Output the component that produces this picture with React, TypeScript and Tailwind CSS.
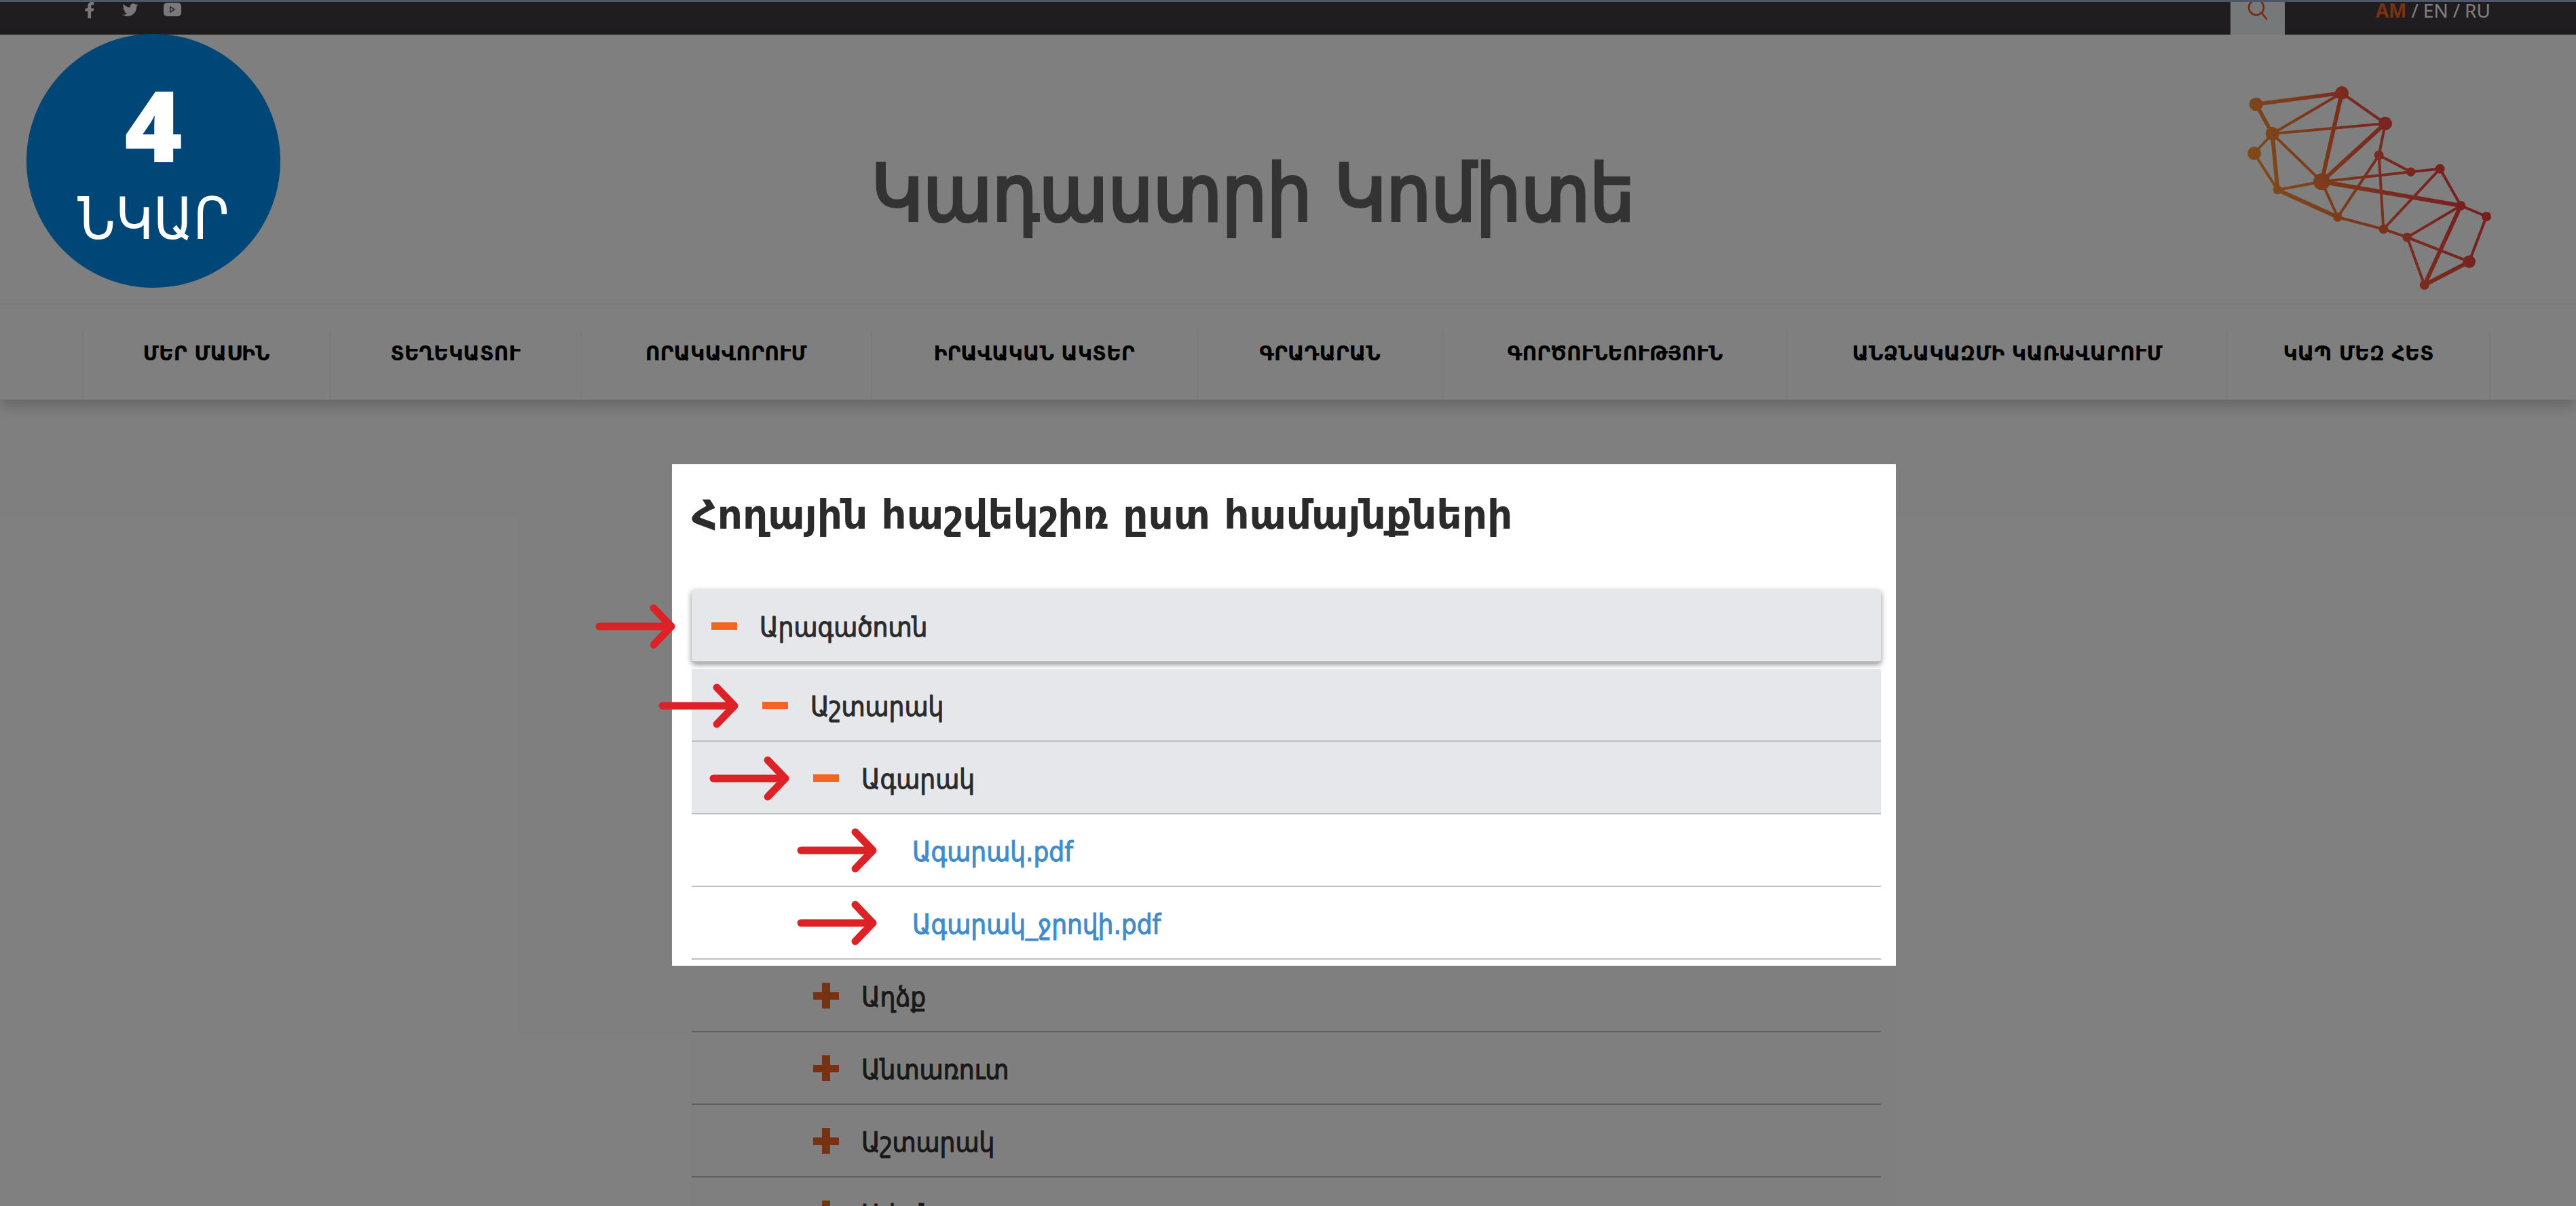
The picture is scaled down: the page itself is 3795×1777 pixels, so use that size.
import type { ReactNode } from 'react';
import { FaFacebookF, FaTwitter } from 'react-icons/fa';

const NAV_ITEMS = [
  { label: 'ՄԵՐ ՄԱՍԻՆ', basis: 'basis-[364px]' },
  { label: 'ՏԵՂԵԿԱՏՈՒ', basis: 'basis-[370px]' },
  { label: 'ՈՐԱԿԱՎՈՐՈՒՄ', basis: 'basis-[428px]' },
  { label: 'ԻՐԱՎԱԿԱՆ ԱԿՏԵՐ', basis: 'basis-[480px]' },
  { label: 'ԳՐԱԴԱՐԱՆ', basis: 'basis-[362px]' },
  { label: 'ԳՈՐԾՈՒՆԵՈՒԹՅՈՒՆ', basis: 'basis-[508px]' },
  { label: 'ԱՆՁՆԱԿԱԶՄԻ ԿԱՌԱՎԱՐՈՒՄ', basis: 'basis-[648px]' },
  { label: 'ԿԱՊ ՄԵԶ ՀԵՏ', basis: 'basis-[387px]' },
];

const VILLAGES = ['Աղձք', 'Անտառուտ', 'Աշտարակ', 'Ավան'];

// x, y, radius
const NODES = [
  [131, 161, 30],
  [510, 111, 30],
  [203, 291, 30],
  [702, 246, 30],
  [123, 378, 30],
  [226, 539, 20],
  [421, 503, 37],
  [674, 386, 21],
  [815, 460, 20],
  [944, 446, 21],
  [492, 660, 20],
  [694, 713, 21],
  [799, 749, 21],
  [1036, 609, 21],
  [1149, 657, 21],
  [1073, 857, 28],
  [875, 960, 21],
];

// from, to, stroke width
const EDGES = [
  [0, 1, 17],
  [0, 2, 17],
  [1, 2, 12],
  [1, 3, 12],
  [1, 6, 18],
  [2, 3, 12],
  [2, 4, 12],
  [2, 5, 18],
  [2, 6, 12],
  [3, 6, 18],
  [3, 7, 12],
  [4, 5, 12],
  [5, 6, 12],
  [5, 10, 18],
  [6, 10, 12],
  [6, 8, 12],
  [6, 13, 19],
  [7, 8, 12],
  [7, 10, 12],
  [7, 11, 12],
  [8, 9, 12],
  [9, 11, 12],
  [9, 13, 12],
  [10, 11, 12],
  [11, 12, 12],
  [12, 13, 12],
  [12, 15, 12],
  [12, 16, 12],
  [13, 14, 12],
  [13, 16, 18],
  [14, 15, 12],
  [15, 16, 18],
];

function Logo() {
  return (
    <svg className="w-[366px] h-[306px] shrink-0" viewBox="84 72 1098 918">
      <defs>
        <linearGradient id="logo" gradientUnits="userSpaceOnUse" x1="120" y1="500" x2="900" y2="150">
          <stop offset="0" stopColor="#ff9a34" />
          <stop offset="0.32" stopColor="#f87838" />
          <stop offset="0.6" stopColor="#f4583c" />
          <stop offset="1" stopColor="#ee3c42" />
        </linearGradient>
      </defs>
      <g stroke="url(#logo)">
        {EDGES.map(([a, b, w]) => (
          <line key={`${a}-${b}`} x1={NODES[a][0]} y1={NODES[a][1]} x2={NODES[b][0]} y2={NODES[b][1]} strokeWidth={w} />
        ))}
      </g>
      <g fill="url(#logo)">
        {NODES.map(([x, y, r]) => (
          <circle key={`${x}-${y}`} cx={x} cy={y} r={r} />
        ))}
      </g>
    </svg>
  );
}

function Arrow({ className }: { className: string }) {
  return (
    <svg
      className={`absolute top-1/2 -translate-y-1/2 w-[118px] h-[66px] ${className}`}
      viewBox="0 0 118 66"
      fill="none"
      stroke="#dc2127"
      strokeWidth="11"
      strokeLinecap="round"
      strokeLinejoin="round"
    >
      <path d="M6 33H112M86 6L112 33L86 60" />
    </svg>
  );
}

function PlusMinus({ open }: { open?: boolean }) {
  return (
    <svg className="w-[38px] h-[38px] shrink-0" viewBox="0 0 38 38" fill="#f26522">
      <path d={open ? 'M0 14h38v11H0z' : 'M0 14h13V0h12v14h13v11H25v13H13V25H0z'} />
    </svg>
  );
}

interface TreeRowProps {
  label: string;
  open?: boolean;
  className: string;
  children?: ReactNode;
}

function TreeRow({ label, open, className, children }: TreeRowProps) {
  return (
    <li className="relative">
      <button
        aria-expanded={!!open}
        className={`flex items-center gap-[33px] w-full h-[107px] border-b-2 border-[#bfbfbf] text-left ${className}`}
      >
        <PlusMinus open={open} />
        <span className="pt-[5px]">{label}</span>
      </button>
      {children}
    </li>
  );
}

function FileRow({ label }: { label: string }) {
  return (
    <li className="relative flex items-center h-[107px] border-b-2 border-[#bfbfbf] pl-[325px]">
      <a href="#" className="pt-[5px] text-[#428bca]">{label}</a>
      <Arrow className="left-[155px]" />
    </li>
  );
}

export default function App() {
  return (
    <div className="relative h-screen overflow-hidden bg-white font-['DejaVu_Sans_Condensed','DejaVu_Sans',sans-serif] text-[#333]">
      <div className="h-[3px] bg-[#9aaed2]" />

      {/* Top bar */}
      <div className="flex h-12 bg-[#3f3a40] pl-[121px] pr-[126px]">
        <div className="flex gap-[36px] text-[#f2f2f2]">
          <a href="#" aria-label="Facebook" className="w-[22px]"><FaFacebookF className="h-6 w-[22px]" /></a>
          <a href="#" aria-label="Twitter" className="w-[26px]"><FaTwitter className="h-[23px] w-[26px]" /></a>
          <a href="#" aria-label="YouTube" className="w-[26px]">
            <svg className="w-[26px] h-[22px]" viewBox="0 0 26 22">
              <rect x="0" y="1" width="26" height="20" rx="5" fill="currentColor" />
              <path d="M10 7v8l6-4z" fill="none" stroke="#3f3a40" strokeWidth="1.4" />
            </svg>
          </a>
        </div>
        <button aria-label="Search" className="ml-auto flex w-20 justify-center bg-[#ecf1f5]">
          <svg className="w-[30px] h-[28px]" viewBox="0 0 30 28" fill="none" stroke="#f2571e" strokeWidth="2.6" strokeLinecap="round">
            <circle cx="13" cy="8" r="11" />
            <path d="M21 16L28 25" />
          </svg>
        </button>
        <div className="ml-[134px] flex gap-[7px] whitespace-pre font-['Noto_Sans','Open_Sans',sans-serif] text-[28px] leading-6 text-white">
          <a href="#" className="font-bold text-[#f26522]">AM</a>
          <span>/</span>
          <a href="#">EN</a>
          <span>/</span>
          <a href="#">RU</a>
        </div>
      </div>

      {/* Header */}
      <header className="shadow-[0_10px_20px_rgba(0,0,0,0.2)]">
        <div className="flex h-[398px] items-start border-b-2 border-[#f4f4f4] pl-[384px] pr-[121px] pt-[73px]">
          <h1 className="grow text-center text-[116px] leading-[322px] text-[#666] [-webkit-text-stroke:4px_#666]">
            Կադաստրի Կոմիտե
          </h1>
          <Logo />
        </div>
        <nav className="pl-[121px] pr-[126px] pt-[38px]">
          <ul className="flex border-l-2 border-[#f7f7f7]">
            {NAV_ITEMS.map((item) => (
              <li key={item.label} className={`h-[102px] shrink grow border-r-2 border-[#f7f7f7] pt-[14px] text-center ${item.basis}`}>
                <a href="#" className="whitespace-nowrap font-['DejaVu_Sans',sans-serif] text-[30px] leading-[40px] font-bold text-black">
                  {item.label}
                </a>
              </li>
            ))}
          </ul>
        </nav>
      </header>

      {/* Dimmed layer */}
      <div className="pointer-events-none absolute inset-0 z-10 bg-black/50" />

      {/* Step badge */}
      <div className="absolute left-[39px] top-[50px] z-20 flex h-[374px] w-[374px] flex-col items-center gap-[10px] rounded-full bg-[#004677] pt-[68px] text-white">
        <span className="font-['Open_Sans',sans-serif] text-[146px] leading-[130px] font-extrabold">4</span>
        <span className="text-[85px] leading-[130px]">ՆԿԱՐ</span>
      </div>

      <main className="pr-3 pt-[95px] text-[40px] leading-[48px]">
        <section className="relative z-20 mx-auto w-[47.66%] bg-white pb-[9px] pl-[29px] pr-[22px] text-[#2b2b2b]">
          <h2 className="h-[185px] pt-[40px] font-['DejaVu_Sans',sans-serif] text-[58px] leading-[70px] font-bold whitespace-nowrap">
            Հողային հաշվեկշիռ ըստ համայնքների
          </h2>
          <ul className="[-webkit-text-stroke:1px]">
            <TreeRow
              label="Արագածոտն"
              open
              className="mb-[10px] rounded-[4px] bg-[#e6e7eb] pl-[29px] shadow-[0_3px_8px_rgba(0,0,0,0.45)]"
            >
              <Arrow className="-left-[142px]" />
            </TreeRow>
            <TreeRow label="Աշտարակ" open className="bg-[#e6e7eb] pl-[104px]">
              <Arrow className="-left-[49px]" />
            </TreeRow>
            <TreeRow label="Ագարակ" open className="bg-[#e6e7eb] pl-[179px]">
              <Arrow className="left-[26px]" />
            </TreeRow>
            <FileRow label="Ագարակ.pdf" />
            <FileRow label="Ագարակ_ջրովի.pdf" />
          </ul>
        </section>
        <ul className="mx-auto -mt-[9px] w-[47.66%] pl-[29px] pr-[22px] [-webkit-text-stroke:1px]">
          {VILLAGES.map((name) => (
            <TreeRow key={name} label={name} className="pl-[179px]" />
          ))}
        </ul>
      </main>
    </div>
  );
}
